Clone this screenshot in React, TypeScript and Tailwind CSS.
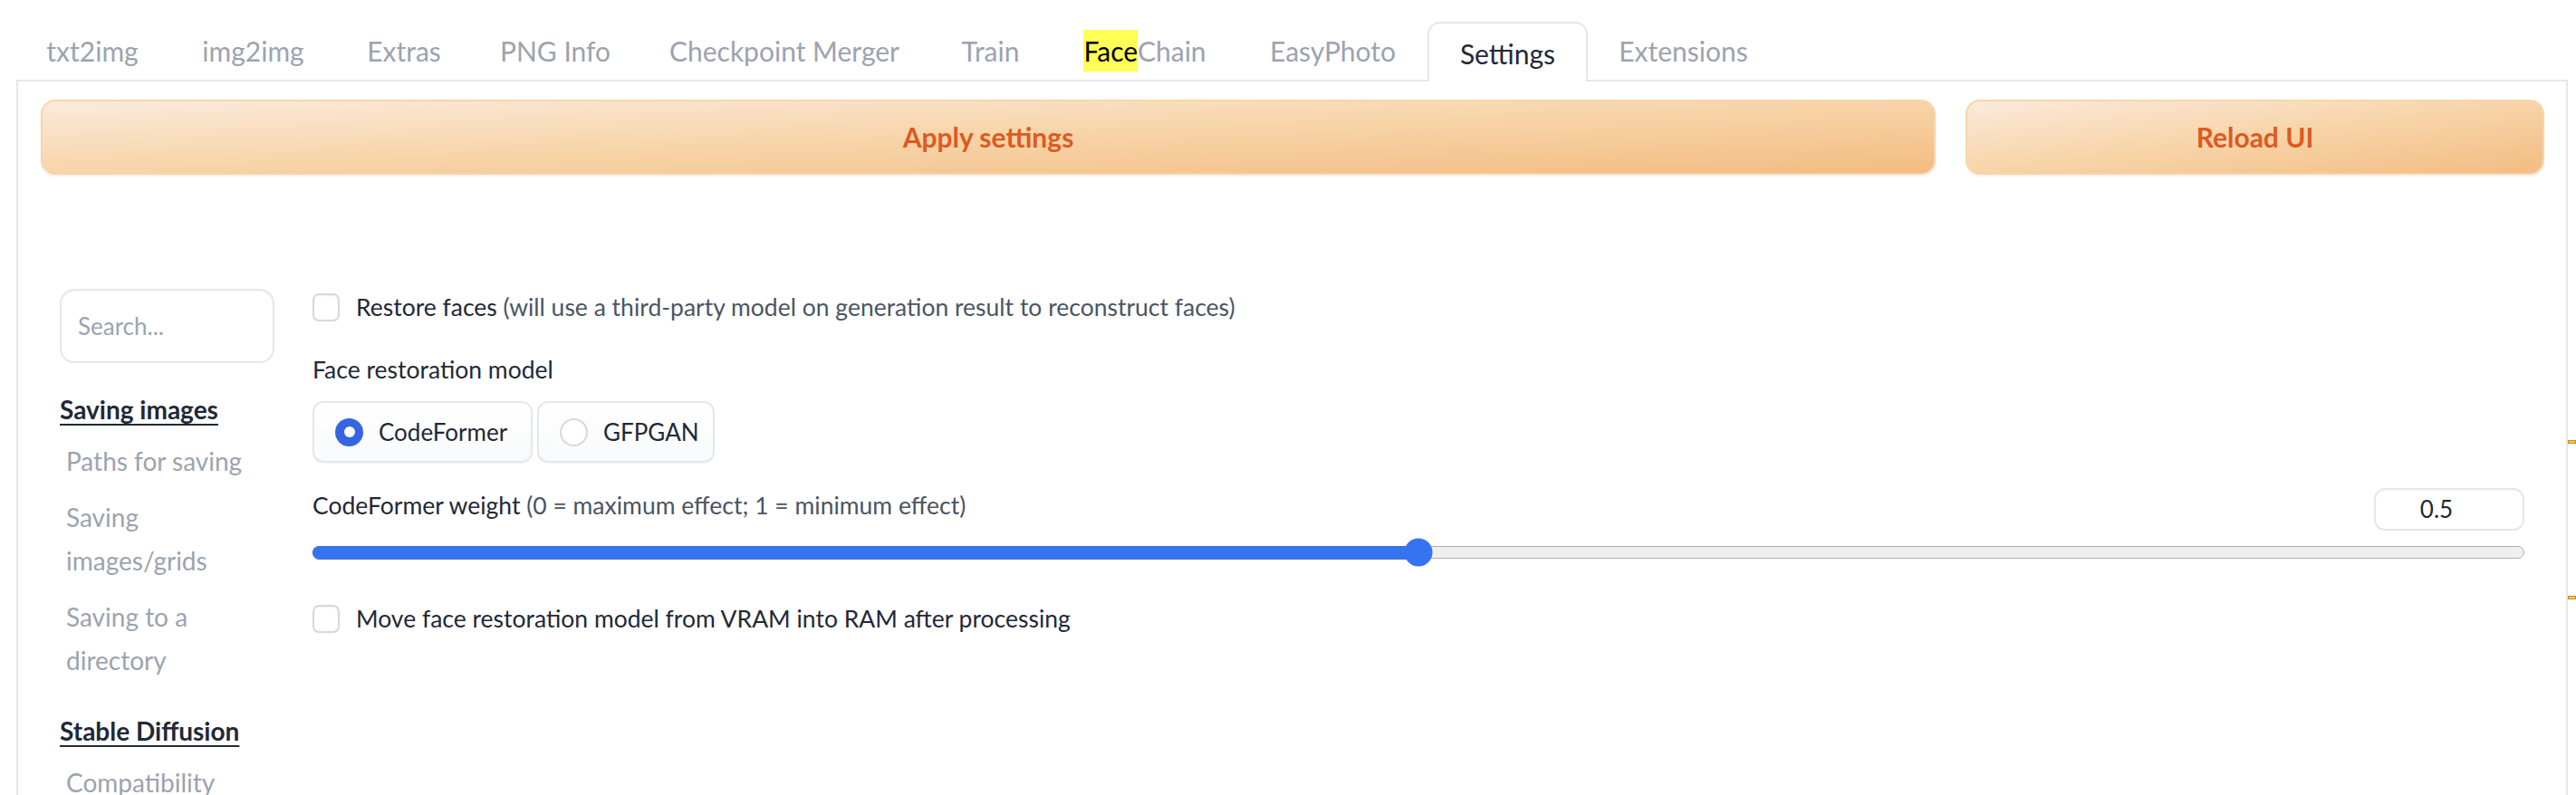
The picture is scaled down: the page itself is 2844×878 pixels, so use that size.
import React from 'react';

const tabs = [
  { label: 'txt2img', w: 'w-[170px]' },
  { label: 'img2img', w: 'w-[185px]' },
  { label: 'Extras', w: 'w-[148px]' },
  { label: 'PNG Info', w: 'w-[186px]' },
  { label: 'Checkpoint Merger', w: 'w-[320px]' },
  { label: 'Train', w: 'w-[135px]' },
  { label: 'FaceChain', w: 'w-[206px]' },
  { label: 'EasyPhoto', w: 'w-[209px]' },
  { label: 'Settings', w: 'w-[177px]' },
  { label: 'Extensions', w: 'w-[211px]' },
];

const Checkbox: React.FC = () => (
  <div className="w-[30px] h-[31px] shrink-0 rounded-[7px] border-2 border-[#d6d8de] bg-white shadow-[inset_0_1px_2px_rgba(0,0,0,0.06)]" />
);

const Radio: React.FC<{ label: string; checked?: boolean; w: string }> = ({ label, checked, w }) => (
  <div className={`${w} h-[68px] flex items-center gap-[17px] pl-[23px] rounded-[12px] border-2 border-[#e5e7eb] bg-gradient-to-b from-white to-[#f9fafb] shadow-[0_1px_2px_rgba(0,0,0,0.05)]`}>
    {checked ? (
      <div className="w-[31px] h-[31px] rounded-full bg-[#3566e0] flex items-center justify-center">
        <div className="w-[12px] h-[12px] rounded-full bg-white" />
      </div>
    ) : (
      <div className="w-[31px] h-[31px] rounded-full border-2 border-[#d6d8de] bg-white" />
    )}
    <span className="text-[26px] text-[#1f2937]">{label}</span>
  </div>
);

const Section: React.FC<{ title: string; className?: string }> = ({ title, className }) => (
  <div className={`text-[28px] leading-[40px] font-bold text-[#1f2937] underline decoration-2 underline-offset-[5px] ${className ?? ''}`}>
    {title}
  </div>
);

const Item: React.FC<{ children: React.ReactNode; className?: string }> = ({ children, className }) => (
  <div className={`pl-[7px] text-[28px] leading-[48px] text-[#9ca3af] ${className ?? ''}`}>{children}</div>
);

export default function App() {
  return (
    <div className="w-[2844px] h-[878px] overflow-hidden bg-white font-['Lato',sans-serif]">
      <div className="flex items-end h-[88px] pl-[17px]">
        {tabs.map((t) =>
          t.label === 'Settings' ? (
            <div
              key={t.label}
              className={`${t.w} h-[66px] -mb-[2px] pt-[3px] relative z-10 flex items-center justify-center bg-white border-2 border-b-0 border-[#e5e7eb] rounded-t-[14px] text-[30px] text-[#1f2937]`}
            >
              {t.label}
            </div>
          ) : (
            <div key={t.label} className={`${t.w} h-[66px] pt-[3px] flex items-center justify-center text-[30px] text-[#9ca3af]`}>
              {t.label === 'FaceChain' ? (
                <span>
                  <span className="bg-[#ffff55] text-black py-[5px]">Face</span>Chain
                </span>
              ) : (
                t.label
              )}
            </div>
          )
        )}
      </div>

      <div className="flex">
        <div className="ml-[18px] w-[2817px] h-[790px] border-2 border-b-0 border-[#e5e7eb] pt-[20px] pl-[25px] pr-[24px]">
          <div className="flex gap-[33px]">
            <button className="flex-1 h-[83px] rounded-[16px] border-2 border-[#f8d6aa] bg-gradient-to-br from-[#fbeadb] via-[#f7d4a8] to-[#f3bc82] shadow-[0_2px_3px_rgba(0,0,0,0.06)] text-[30px] font-bold text-[#dd5a22]">
              Apply settings
            </button>
            <button className="w-[639px] h-[83px] rounded-[16px] border-2 border-[#f8d6aa] bg-gradient-to-br from-[#fbeadb] via-[#f7d4a8] to-[#f3bc82] shadow-[0_2px_3px_rgba(0,0,0,0.06)] text-[30px] font-bold text-[#dd5a22]">
              Reload UI
            </button>
          </div>

          <div className="flex gap-[42px] mt-[126px] pl-[21px] pr-[22px]">
            <aside className="w-[237px] shrink-0">
              <div className="h-[82px] rounded-[16px] border-2 border-[#e5e7eb] shadow-[inset_0_1px_3px_rgba(0,0,0,0.05)] flex items-center pl-[18px] text-[26px] text-[#9ca3af]">
                Search...
              </div>
              <Section title="Saving images" className="mt-[31px]" />
              <Item className="mt-[13px]">Paths for saving</Item>
              <Item className="mt-[14px]">
                Saving
                <br />
                images/grids
              </Item>
              <Item className="mt-[14px]">
                Saving to a
                <br />
                directory
              </Item>
              <Section title="Stable Diffusion" className="mt-[34px]" />
              <Item className="mt-[13px]">Compatibility</Item>
            </aside>

            <main className="flex-1 pt-[5px] text-[26.5px] text-[#1f2937]">
              <div className="flex items-center gap-[18px] h-[31px]">
                <Checkbox />
                <span>
                  Restore faces <span className="text-[#4b5563]">(will use a third-party model on generation result to reconstruct faces)</span>
                </span>
              </div>

              <div className="mt-[35px] leading-[36px]">Face restoration model</div>

              <div className="flex gap-[5px] mt-[17px]">
                <Radio label="CodeFormer" checked w="w-[243px]" />
                <Radio label="GFPGAN" w="w-[196px]" />
              </div>

              <div className="flex items-center justify-between h-[47px] mt-[28px]">
                <span className="pb-[7px]">
                  CodeFormer weight <span className="text-[#4b5563]">(0 = maximum effect; 1 = minimum effect)</span>
                </span>
                <div className="w-[166px] h-[47px] rounded-[12px] border-2 border-[#e5e7eb] shadow-[inset_0_1px_2px_rgba(0,0,0,0.04)] flex items-center justify-center pr-[28px] text-[26px]">
                  0.5
                </div>
              </div>

              <div className="relative h-[14px] mt-[17px] rounded-full border-[1.5px] border-[#b0b0b0] bg-[#efefef]">
                <div className="absolute left-[-1.5px] top-[-1.5px] bottom-[-1.5px] w-[50%] rounded-l-full bg-[#3574f0] border-y-[1.5px] border-[#4a70c8]" />
                <div className="absolute left-[50%] top-1/2 -translate-x-1/2 -translate-y-1/2 w-[31px] h-[31px] rounded-full bg-[#3574f0]" />
              </div>

              <div className="flex items-center gap-[18px] h-[31px] mt-[51px]">
                <Checkbox />
                <span>Move face restoration model from VRAM into RAM after processing</span>
              </div>
            </main>
          </div>
        </div>

        <div className="w-[9px] flex flex-col">
          <div className="mt-[398px] h-[4px] border border-[#cf8a14] bg-[#f3c46a]" />
          <div className="mt-[168px] h-[4px] border border-[#cf8a14] bg-[#f3c46a]" />
        </div>
      </div>
    </div>
  );
}
